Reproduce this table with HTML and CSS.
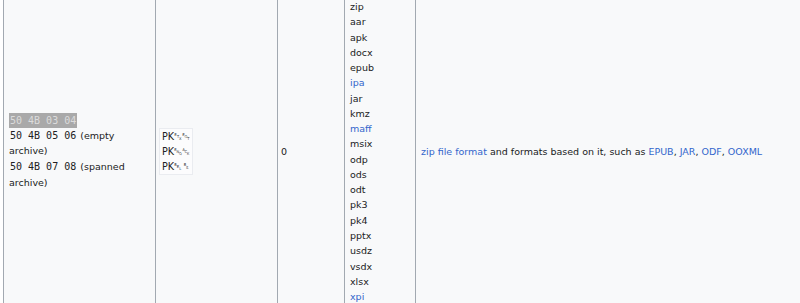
FILE: index.html
```html
<!DOCTYPE html>
<html>
<head>
<meta charset="utf-8">
<link rel="stylesheet" href="styles.css">
</head>
<body>
<table class="sig">
<colgroup>
<col class="w-hex">
<col class="w-iso">
<col class="w-off">
<col class="w-ext">
<col class="w-desc">
</colgroup>
<tr>
<td class="c-hex">
<div class="hexline"><code class="hl">50 4B 03 04</code></div>
<div class="hexline"><code>50 4B 05 06</code> (empty archive)</div>
<div class="hexline"><code>50 4B 07 08</code> (spanned archive)</div>
</td>
<td class="c-iso">
<pre class="pk">PK␃␄
PK␅␆
PK␇␈</pre>
</td>
<td class="c-off">0</td>
<td class="c-ext">
<div class="ext">zip</div>
<div class="ext">aar</div>
<div class="ext">apk</div>
<div class="ext">docx</div>
<div class="ext">epub</div>
<div class="ext"><a href="#">ipa</a></div>
<div class="ext">jar</div>
<div class="ext">kmz</div>
<div class="ext"><a href="#">maff</a></div>
<div class="ext">msix</div>
<div class="ext">odp</div>
<div class="ext">ods</div>
<div class="ext">odt</div>
<div class="ext">pk3</div>
<div class="ext">pk4</div>
<div class="ext">pptx</div>
<div class="ext">usdz</div>
<div class="ext">vsdx</div>
<div class="ext">xlsx</div>
<div class="ext"><a href="#">xpi</a></div>
</td>
<td class="c-desc"><a href="#">zip file format</a> and formats based on it, such as <a href="#">EPUB</a>, <a href="#">JAR</a>, <a href="#">ODF</a>, <a href="#">OOXML</a></td>
</tr>
</table>
</body>
</html>
```

FILE: styles.css
```css
html, body {
  margin: 0;
  padding: 0;
  background: #ffffff;
  overflow: hidden;
}
body {
  font-family: "DejaVu Sans", sans-serif;
  font-size: 9.5px;
  color: #202122;
}
a {
  color: #3366cc;
  text-decoration: none;
}
.sig {
  margin-left: 3px;
  margin-top: -6px;
  border-collapse: collapse;
  background: #f8f9fa;
  width: 1000px;
  table-layout: fixed;
}
.w-hex { width: 152px; }
.w-iso { width: 122px; }
.w-off { width: 67px; }
.w-ext { width: 71px; }
.sig td {
  border: 1px solid #a2a9b1;
  padding: 4px 5px;
  vertical-align: middle;
}
.c-hex { padding-left: 5px !important; }
.c-iso { padding-left: 3px !important; }
.c-off { padding-left: 3px !important; }
.c-desc { padding-left: 5px !important; }
.hexline {
  line-height: 15.6px;
}
.hexline:first-child {
  margin-bottom: -1px;
}
code {
  font-family: "DejaVu Sans Mono", monospace;
  font-size: 10px;
  padding: 1px 1px;
}
.hl {
  background: #a9a9a9;
  color: #dcdcdc;
  padding: 2px 1px;
}
.pk {
  margin: 0;
  display: inline-block;
  font-family: "DejaVu Sans", sans-serif;
  font-size: 9.6px;
  line-height: 15px;
  background: #fcfcfd;
  border: 1px solid #eaecf0;
  padding: 0 2px;
}
.ext {
  line-height: 15.26px;
}
```
